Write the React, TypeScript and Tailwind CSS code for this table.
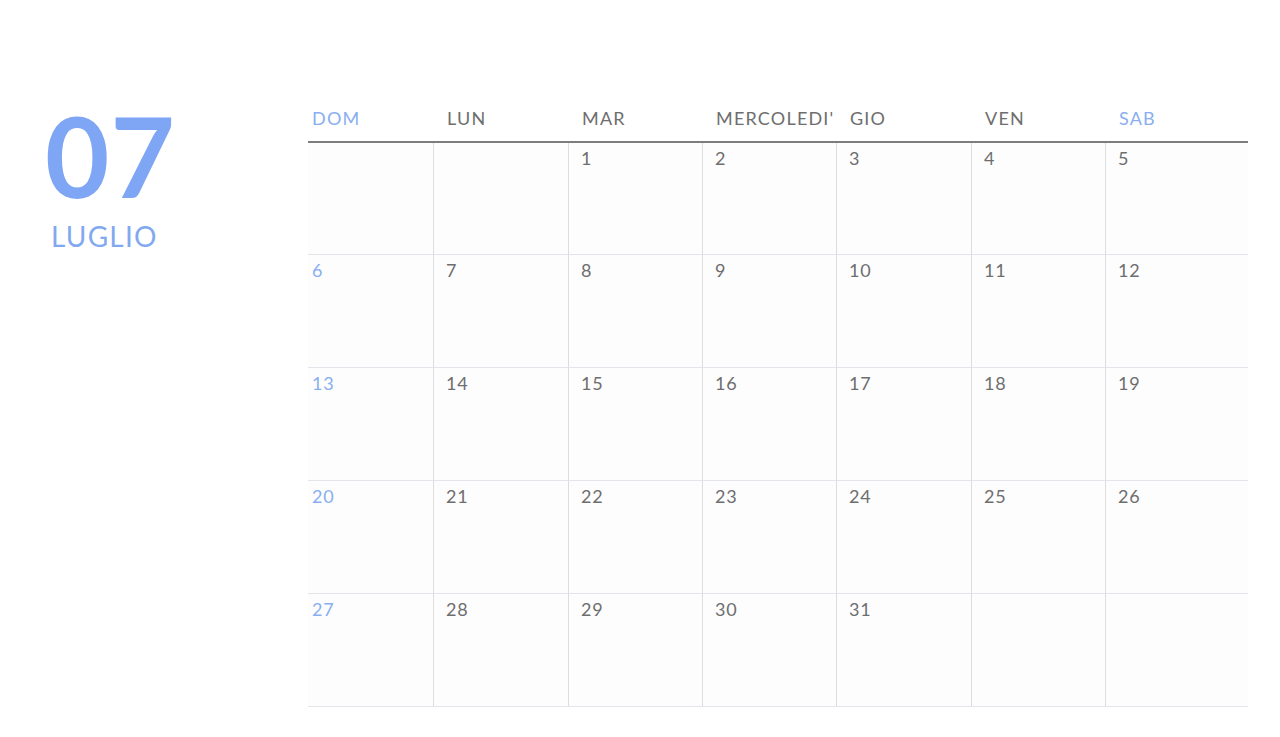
import React from "react"

const days = [
  { name: "DOM", blue: true },
  { name: "LUN" },
  { name: "MAR" },
  { name: "MERCOLEDI'" },
  { name: "GIO" },
  { name: "VEN" },
  { name: "SAB", blue: true },
]

// luglio: il primo cade di martedì
const cells: (number | null)[] = [
  null, null, 1, 2, 3, 4, 5,
  6, 7, 8, 9, 10, 11, 12,
  13, 14, 15, 16, 17, 18, 19,
  20, 21, 22, 23, 24, 25, 26,
  27, 28, 29, 30, 31, null, null,
]

const cols = "grid grid-cols-[126px_135px_134px_134px_135px_134px_142px]"

export default function App() {
  return (
    <div className="flex h-[737px] w-[1280px] bg-white font-['Lato','Liberation_Sans',sans-serif]">
      <div className="w-[308px] shrink-0 pl-[45px] pt-[100px]">
        <div className="text-[111px] font-bold leading-none tracking-[1px] text-[#7ea6f4]">07</div>
        <div className="mt-[11px] pl-[6px] text-[28px] leading-none tracking-[1.2px] text-[#82a9f0]">LUGLIO</div>
      </div>

      <div className="w-[940px] pt-[106px]">
        <div className={`${cols} border-b-2 border-[#7d7d7d] pb-[11px]`}>
          {days.map((d, i) => (
            <div
              key={d.name}
              className={`whitespace-nowrap text-[18px] leading-6 tracking-[1.2px] ${i === 0 ? "pl-[4px]" : "pl-[13px]"} ${
                d.blue ? "text-[#8aaef0]" : "text-[#6e6e6e]"
              }`}
            >
              {d.name}
            </div>
          ))}
        </div>

        <div className={cols}>
          {cells.map((n, i) => {
            const col = i % 7
            const row = Math.floor(i / 7)
            return (
              <div
                key={i}
                className={`border-b border-[#e6e4ea] bg-[#fdfdfe] pt-[3px] text-[18px] leading-6 tracking-[0.8px] ${
                  row === 0 ? "h-[112px]" : "h-[113px]"
                } ${col < 6 ? "border-r border-r-[#dedce2]" : ""} ${col === 0 ? "pl-[4px] text-[#8aaef0]" : "pl-[12px] text-[#6e6e6e]"}`}
              >
                {n}
              </div>
            )
          })}
        </div>
      </div>
    </div>
  )
}
